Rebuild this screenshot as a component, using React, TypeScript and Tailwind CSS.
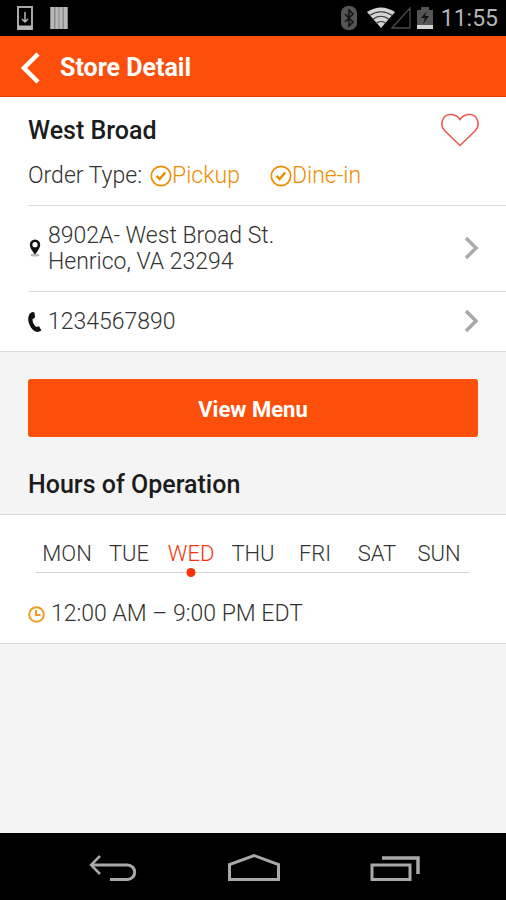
import type { ReactNode } from 'react';
import clsx from 'clsx';

const DAYS = ['MON', 'TUE', 'WED', 'THU', 'FRI', 'SAT', 'SUN'];
const TODAY = 'WED';

function StatusBar() {
  return (
    <div className="flex h-9 items-center justify-between bg-black pl-4 pr-2">
      <div className="flex items-center gap-4">
        <svg width="18" height="26" viewBox="0 0 18 26" fill="none">
          <rect x="2" y="2" width="14" height="22" stroke="#a8a8a8" strokeWidth="2" />
          <path d="M2 22.5h14" stroke="#b8b8b8" strokeWidth="4" />
          <path d="M9 7v10M6 14l3 3 3-3" stroke="#b8b8b8" strokeWidth="1.5" />
        </svg>
        <svg width="18" height="22" viewBox="0 0 18 22">
          <path d="M0 0h18v22H0z" fill="#8a8a8a" />
          <path d="M2.5 0v22M7 0v22M11 0v22M15.500 0v22" stroke="#b8b8b8" strokeWidth="3" />
        </svg>
      </div>
      <div className="flex items-center">
        <svg className="mr-2.5" width="16" height="24" viewBox="0 0 16 24" fill="none">
          <rect width="16" height="24" rx="7" fill="#555" />
          <path d="M4 8l8 8-4 4V4l4 4-8 8" stroke="#111" strokeWidth="1.5" />
        </svg>
        <svg width="28" height="22" viewBox="0 0 28 22" fill="none">
          <path d="M0 5Q14-4 28 5L14 21z" fill="#d4d4d4" />
          <path d="M2.500 8.500Q14 1 25.500 8.500M5.500 12.500Q14 6 22.500 12.500M9 16.500Q14 12.500 19 16.500" stroke="#333" strokeWidth="1.200" />
        </svg>
        <svg className="-ml-1 mr-1.5" width="20" height="22" viewBox="0 0 20 22" fill="none">
          <path d="M1 21L19 1v20z" stroke="#4a4a4a" strokeWidth="1.300" />
        </svg>
        <svg className="mr-2" width="16" height="22" viewBox="0 0 16 22">
          <path d="M4 0h8v3h4v19H0V3h4z" fill="#555" />
          <path d="M0 18h16v4H0z" fill="#d4d4d4" />
          <path d="M10 4l-6 7h4l-2 6 6-8H8z" fill="#111" />
        </svg>
        <span className="pt-0.5 font-normal text-[#b4b4b4]">11:55</span>
      </div>
    </div>
  );
}

function CheckedType({ label }: { label: string }) {
  return (
    <span className="flex items-center text-[#f08c00]">
      <svg width="22" height="22" viewBox="0 0 22 22" fill="none" stroke="currentColor">
        <circle cx="11" cy="11" r="9.700" strokeWidth="1.700" />
        <path d="M6.500 11l3.200 3 5.500-6.500" strokeWidth="2.500" />
      </svg>
      {label}
    </span>
  );
}

function DetailRow({ icon, children }: { icon: ReactNode; children: ReactNode }) {
  return (
    <a href="#" className="flex items-center pt-[17px] pr-6 pb-4">
      <span className="w-5 shrink-0">{icon}</span>
      <span className="flex-1">{children}</span>
      <svg width="20" height="24" viewBox="0 0 20 24" fill="none">
        <path d="M4 1l10 10L4 21" stroke="#a9a9a9" strokeWidth="3.500" />
      </svg>
    </a>
  );
}

function NavBar() {
  return (
    <nav className="flex h-[67px] items-center justify-between bg-black pt-0.5 pr-[86px] pl-[88px]">
      <button type="button" aria-label="Back">
        <svg width="50" height="30" viewBox="0 0 50 30" fill="none" stroke="#a9a9a9" strokeWidth="3">
          <path d="M3 12h36.500a7.200 7.200 0 0 1 0 14.400H22" />
          <path d="M12 3L3 12l9 9" strokeWidth="2.500" />
        </svg>
      </button>
      <button type="button" aria-label="Home">
        <svg width="54" height="30" viewBox="0 0 54 30" fill="none" stroke="#a9a9a9" strokeWidth="3">
          <path d="M2.500 26.500V11.500L27 2.500l24.500 9v15z" />
        </svg>
      </button>
      <button type="button" aria-label="Recent apps">
        <svg width="50" height="30" viewBox="0 0 50 30" fill="none" stroke="#a9a9a9">
          <rect x="2" y="12" width="38" height="14.500" strokeWidth="3" />
          <path d="M12 5h36v16" strokeWidth="3.500" />
        </svg>
      </button>
    </nav>
  );
}

export default function App() {
  return (
    <div className="flex min-h-screen flex-col bg-[#f4f4f4] font-[Roboto,sans-serif] text-[23px] leading-[26px] font-light text-[#333]">
      <StatusBar />

      <header className="flex h-[61px] items-center gap-4 border-b border-[#e63c00] bg-[#fb4f0b] pt-1 pl-5 text-white">
        <button type="button" aria-label="Back">
          <svg width="24" height="32" viewBox="0 0 24 32" fill="none">
            <path d="M18 2L4 16l14 14" stroke="currentColor" strokeWidth="4.500" />
          </svg>
        </button>
        <h1 className="text-[25px] font-bold">Store Detail</h1>
      </header>

      <main className="flex-1">
        <section className="border-b border-[#dcdcdc] bg-white pl-7">
          <div className="flex h-[109px] justify-between border-b border-[#dcdcdc] pt-4 pr-6">
            <div>
              <h2 className="text-[25px] leading-9 font-medium text-[#1c1c1c]">West Broad</h2>
              <div className="mt-3.5 flex items-center gap-[30px]">
                <div className="flex gap-2">
                  Order Type: <CheckedType label="Pickup" />
                </div>
                <CheckedType label="Dine-in" />
              </div>
            </div>
            <button type="button" aria-label="Favorite" className="h-9">
              <svg width="42" height="36" viewBox="0 0 42 36" fill="none">
                <path
                  d="M20 32.500L4.500 17.500C-.5 12 2 1.500 10.500 1.500 15 1.500 18 3.500 20 6.500 22 3.500 25 1.500 29.500 1.500 38 1.500 40.500 12 35.500 17.500z"
                  stroke="#ee5a50"
                  strokeWidth="1.600"
                />
              </svg>
            </button>
          </div>
          <div className="border-b border-[#dcdcdc]">
            <DetailRow
              icon={
                <svg width="14" height="20" viewBox="0 0 14 20">
                  <ellipse cx="7" cy="16" rx="4.500" ry="1.500" fill="#bbb" />
                  <path d="M7 .5a5.200 5.200 0 0 0-5.200 5.200C1.800 9.500 7 15.500 7 15.500s5.200-6 5.200-9.800A5.200 5.200 0 0 0 7 .5z" fill="#111" />
                  <circle cx="7" cy="5.700" r="2.600" fill="#fff" />
                </svg>
              }
            >
              <span className="block">8902A- West Broad St.</span>
              <span className="block">Henrico, VA 23294</span>
            </DetailRow>
          </div>
          <DetailRow
            icon={
              <svg width="14" height="20" viewBox="0 0 14 20" fill="#111">
                <path d="M4.500 0C1 1 0 4.500.3 8.500 1 14 5 20 10 20l3.500-1.500-2.500-4.200-2.800.8C5.500 12.500 4.500 10 4.500 7.200L7 5.500 6.500.5z" />
              </svg>
            }
          >
            1234567890
          </DetailRow>
        </section>

        <div className="px-7 pt-[27px]">
          <button type="button" className="h-[58px] w-full rounded-[3px] bg-[#fb4f0b] pt-1 text-[22px] font-bold text-white">
            View Menu
          </button>
        </div>

        <h2 className="px-7 pt-[34px] pb-[15px] text-[25px] leading-7 font-medium text-[#1c1c1c]">Hours of Operation</h2>

        <section className="border-y border-[#dcdcdc] bg-white">
          <div className="mx-9 grid grid-cols-7 border-b border-[#d4d4d4] pt-[26px] text-[22px]">
            {DAYS.map((day) => (
              <button
                key={day}
                type="button"
                className={clsx('relative pb-[5px]', day === TODAY && 'text-[#f8320a]')}
              >
                {day}
                {day === TODAY && (
                  <span className="absolute -bottom-[5px] left-1/2 size-[9px] -translate-x-1/2 rounded-full bg-[#f8320a]" />
                )}
              </button>
            ))}
          </div>
          <div className="flex items-center gap-1.5 px-7 pt-7 pb-4">
            <svg width="17" height="17" viewBox="0 0 17 17" fill="none" stroke="#f39a1c" strokeWidth="2">
              <circle cx="8.500" cy="8.500" r="7.300" />
              <path d="M8 4v5h4.500" />
            </svg>
            12:00 AM – 9:00 PM EDT
          </div>
        </section>
      </main>

      <NavBar />
    </div>
  );
}
